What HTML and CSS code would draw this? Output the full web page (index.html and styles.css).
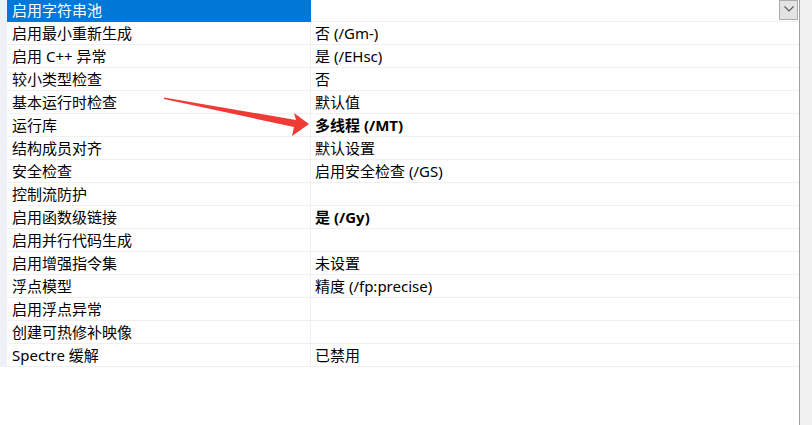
FILE: index.html
```html
<!DOCTYPE html>
<html lang="zh-CN">
<head>
<meta charset="utf-8">
<link rel="stylesheet" href="styles.css">
</head>
<body>
<div class="page">
  <div class="main">
    <div class="grid">
      <div class="row first">
        <div class="strip"></div>
        <div class="label selected">启用字符串池</div>
        <div class="value editor">
          <span class="dropbtn">
            <svg width="10" height="6" viewBox="0 0 10 6"><path d="M0.5 0.5 L5 5 L9.5 0.5" fill="none" stroke="#555" stroke-width="1.1"/></svg>
          </span>
        </div>
      </div>
      <div class="row"><div class="strip"></div><div class="label">启用最小重新生成</div><div class="value">否 (/Gm-)</div></div>
      <div class="row"><div class="strip"></div><div class="label">启用 C++ 异常</div><div class="value">是 (/EHsc)</div></div>
      <div class="row"><div class="strip"></div><div class="label">较小类型检查</div><div class="value">否</div></div>
      <div class="row"><div class="strip"></div><div class="label">基本运行时检查</div><div class="value">默认值</div></div>
      <div class="row"><div class="strip"></div><div class="label">运行库</div><div class="value bold">多线程 (/MT)</div></div>
      <div class="row"><div class="strip"></div><div class="label">结构成员对齐</div><div class="value">默认设置</div></div>
      <div class="row"><div class="strip"></div><div class="label">安全检查</div><div class="value">启用安全检查 (/GS)</div></div>
      <div class="row"><div class="strip"></div><div class="label">控制流防护</div><div class="value"></div></div>
      <div class="row"><div class="strip"></div><div class="label">启用函数级链接</div><div class="value bold">是 (/Gy)</div></div>
      <div class="row"><div class="strip"></div><div class="label">启用并行代码生成</div><div class="value"></div></div>
      <div class="row"><div class="strip"></div><div class="label">启用增强指令集</div><div class="value">未设置</div></div>
      <div class="row"><div class="strip"></div><div class="label">浮点模型</div><div class="value">精度 (/fp:precise)</div></div>
      <div class="row"><div class="strip"></div><div class="label">启用浮点异常</div><div class="value"></div></div>
      <div class="row"><div class="strip"></div><div class="label">创建可热修补映像</div><div class="value"></div></div>
      <div class="row"><div class="strip"></div><div class="label">Spectre 缓解</div><div class="value">已禁用</div></div>
    </div>
    <svg class="arrow" width="160" height="50" viewBox="0 0 160 50">
      <polygon points="0,1.5 132,24 130,17 145,28 128,40 130,31 0,3" fill="#ef3b36"/>
    </svg>
  </div>
  <div class="vline"></div>
  <div class="side"></div>
</div>
</body>
</html>
```
FILE: styles.css
```css
html, body {
  margin: 0;
  padding: 0;
  background: #ffffff;
}
body {
  font-family: "Noto Sans", "Noto Sans CJK SC", sans-serif;
  font-size: 15px;
  color: #000000;
}
.page {
  display: flex;
  width: 812px;
  height: 425px;
  overflow: hidden;
}
.main {
  position: relative;
  width: 799px;
  flex: none;
}
.vline {
  width: 1px;
  background: #a0a0a0;
  flex: none;
}
.side {
  flex: 1;
  background: #f0f0f0;
}
.grid {
  display: flex;
  flex-direction: column;
}
.row {
  display: grid;
  grid-template-columns: 7px 304px 1fr;
  height: 22px;
  border-bottom: 1px solid #f0f0f0;
}
.row.first {
  height: 21px;
}
.strip {
  background: #eef2f8;
  margin-bottom: -1px;
}
.label {
  padding-left: 5px;
  line-height: 22px;
  white-space: nowrap;
  border-right: 1px solid #f0f0f0;
}
.label.selected {
  background: #0078d7;
  color: #ffffff;
  border-right: none;
  line-height: 21px;
  margin-bottom: -1px;
  padding-right: 1px;
}
.value {
  padding-left: 4px;
  line-height: 22px;
  white-space: nowrap;
}
.value.bold {
  font-weight: bold;
}
.value.editor {
  display: flex;
  justify-content: flex-end;
  padding-right: 0;
}
.dropbtn {
  width: 19px;
  height: 20px;
  box-sizing: border-box;
  background: #e3e3e3;
  border: 1px solid #acacac;
  display: flex;
  align-items: center;
  justify-content: center;
  margin-right: 1px;
}
.dropbtn svg {
  display: block;
  margin-top: -2px;
}
.arrow {
  position: absolute;
  left: 164px;
  top: 96px;
}
```
